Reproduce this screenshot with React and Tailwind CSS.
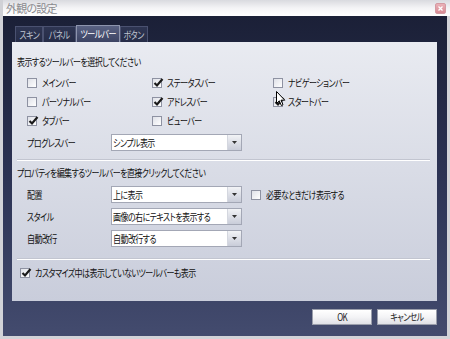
import React from 'react';

const font = { fontFamily: '"Noto Sans CJK JP", "Noto Sans", sans-serif', fontFeatureSettings: '"palt"' };

// narrow text, like the compact UI font of the original
function T({ children, center }) {
  return (
    <span className={center ? 'inline-block whitespace-nowrap origin-center scale-x-[0.8]' : 'inline-block whitespace-nowrap origin-left scale-x-[0.8]'}>
      {children}
    </span>
  );
}

function Check({ checked }) {
  return (
    <span className="relative inline-block w-[10px] h-[10px] shrink-0 border border-[#8e92a2] bg-gradient-to-br from-[#dfe1e8] to-white">
      {checked && (
        <svg className="absolute left-[0px] top-[-2px]" width="11" height="11" viewBox="0 0 11 11">
          <path d="M1.5 6 L4 8.5 L9.5 2" fill="none" stroke="#1a1a1a" strokeWidth="2.2" />
        </svg>
      )}
    </span>
  );
}

function CheckItem({ checked, label }) {
  return (
    <div className="flex items-center h-[19px]">
      <Check checked={checked} />
      <span className="ml-[5px]"><T>{label}</T></span>
    </div>
  );
}

function Select({ value }) {
  return (
    <div className="flex w-[131px] h-[17px] border border-[#a3a7b5] bg-white">
      <div className="flex-1 flex items-center pl-[1px] overflow-hidden"><T>{value}</T></div>
      <div className="w-[14px] flex items-center justify-center bg-gradient-to-b from-[#f2f3f6] to-[#c9cdd9] border-l border-[#d4d7df]">
        <svg width="5" height="3" viewBox="0 0 5 3">
          <path d="M0 0 H5 L2.5 3 Z" fill="#333" />
        </svg>
      </div>
    </div>
  );
}

function Row({ label, value, children }) {
  return (
    <div className="flex items-center h-[17px]">
      <span className="w-[94px] pl-[10px]"><T>{label}</T></span>
      <Select value={value} />
      {children}
    </div>
  );
}

function Tab({ label, active, w }) {
  return (
    <div
      className={
        (active
          ? 'h-[17px] flex items-center justify-center border border-b-0 border-[#8d94ad] bg-gradient-to-b from-[#5a6283] to-[#3c4363] text-white '
          : 'h-[16px] flex items-center justify-center border border-b-0 border-[#4a5170] bg-gradient-to-b from-[#2e3552] to-[#262c47] text-[#bfc3d0] ') + w
      }
    >
      <T center>{label}</T>
    </div>
  );
}

export default function App() {
  return (
    <div className="w-[450px] h-[339px] flex flex-col bg-[#d2d3d8] text-[10px] tracking-[-0.7px] text-[#111] leading-none" style={font}>
      {/* title bar */}
      <div className="relative h-[16px] flex items-center pl-[3px] bg-gradient-to-b from-[#d9dadf] via-[#f4f4f6] to-white border-l-[3px] border-[#d0d1d6]">
        <span className="text-[11px] tracking-[-0.8px] text-[#8a8a8e]">外観の設定</span>
        <div className="absolute right-[4px] top-[3px] w-[11px] h-[11px] rounded-[2px] bg-gradient-to-b from-[#eab2b8] to-[#d88a94] border border-[#d49aa2] flex items-center justify-center">
          <svg width="5" height="5" viewBox="0 0 5 5">
            <path d="M0.5 0.5 L4.5 4.5 M4.5 0.5 L0.5 4.5" stroke="white" strokeWidth="1.3" />
          </svg>
        </div>
      </div>

      {/* body */}
      <div className="flex-1 flex flex-col mx-[3px] mb-[3px] pl-[9px] pr-[10px] pt-[9px] bg-gradient-to-b from-[#1b2037] via-[#2c3354] to-[#434b6e]">
        <div className="flex items-end ml-[3px]">
          <Tab label="スキン" w="w-[28px]" />
          <Tab label="パネル" w="w-[33px]" />
          <Tab label="ツールバー" active w="w-[44px]" />
          <Tab label="ボタン" w="w-[28px]" />
        </div>

        <div className="h-[259px] flex flex-col bg-gradient-to-b from-[#e9ebf1] to-[#c9cddb] pl-[5px] pr-[5px]">
          <div className="h-[12px] mt-[14px] flex items-center"><T>表示するツールバーを選択してください</T></div>
          <div className="grid grid-cols-[125px_121px_120px] pl-[10px] mt-[5px]">
            <CheckItem label="メインバー" />
            <CheckItem checked label="ステータスバー" />
            <CheckItem label="ナビゲーションバー" />
            <CheckItem label="パーソナルバー" />
            <CheckItem checked label="アドレスバー" />
            <div className="relative">
              <CheckItem checked label="スタートバー" />
              <svg className="absolute left-[3px] top-[-1px]" width="10" height="16" viewBox="0 0 10 16">
                <path d="M0.5 0.5 L0.5 12.5 L3.3 9.8 L5.3 14.5 L7 13.7 L5 9.2 L8.8 9.2 Z" fill="white" stroke="black" strokeWidth="1" strokeLinejoin="round" />
              </svg>
            </div>
            <CheckItem checked label="タブバー" />
            <CheckItem label="ビューバー" />
          </div>
          <div className="mt-[4px]">
            <Row label="プログレスバー" value="シンプル表示" />
          </div>

          <div className="mt-[8px] border-t border-[#c2c5d0] border-b border-b-white mr-[2px]" />

          <div className="h-[12px] mt-[6px] flex items-center"><T>プロパティを編集するツールバーを直接クリックしてください</T></div>
          <div className="flex flex-col gap-[5px] mt-[7px]">
            <Row label="配置" value="上に表示">
              <div className="flex items-center ml-[9px]">
                <Check />
                <span className="ml-[5px]"><T>必要なときだけ表示する</T></span>
              </div>
            </Row>
            <Row label="スタイル" value="画像の右にテキストを表示する" />
            <Row label="自動改行" value="自動改行する" />
          </div>

          <div className="mt-[11px] border-t border-[#c2c5d0] border-b border-b-white mr-[2px]" />

          <div className="flex items-center h-[20px] mt-[3px] pl-[3px]">
            <Check checked />
            <span className="ml-[5px]"><T>カスタマイズ中は表示していないツールバーも表示</T></span>
          </div>
        </div>

        <div className="flex justify-end gap-[5px] mt-[8px]">
          <button className="w-[60px] h-[16px] flex items-center justify-center border border-[#9a9eab] bg-gradient-to-b from-white via-[#f4f4f6] to-[#dfe0e6] text-[#222]"><T center>OK</T></button>
          <button className="w-[60px] h-[16px] flex items-center justify-center border border-[#9a9eab] bg-gradient-to-b from-white via-[#f4f4f6] to-[#dfe0e6] text-[#222]"><T center>キャンセル</T></button>
        </div>
      </div>
    </div>
  );
}
